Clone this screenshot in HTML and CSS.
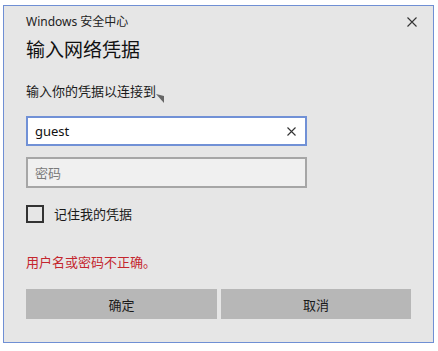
FILE: index.html
```html
<!DOCTYPE html>
<html lang="zh-CN">
<head>
    <meta charset="UTF-8">
    <meta name="viewport" content="width=device-width, initial-scale=1.0">
    <title>Windows 安全中心</title>
    <link rel="stylesheet" href="styles.css">
</head>
<body>
    <div class="dialog">
        <div class="title-bar">
            <span class="title">Windows 安全中心</span>
            <span class="close">
                <svg width="10" height="10" viewBox="0 0 10 10"><path d="M0.5 0.5 L9.5 9.5 M9.5 0.5 L0.5 9.5" stroke="#333" stroke-width="1.1"/></svg>
            </span>
        </div>

        <div class="content">
            <h2>输入网络凭据</h2>
            <p class="prompt">输入你的凭据以连接到<svg class="pointer" width="8" height="9" viewBox="0 0 8 9"><path d="M0 0 L8 2 L8 9 Z" fill="#666"/></svg></p>

            <div class="field focused">
                <span class="value">guest</span>
                <svg class="clear" width="9" height="9" viewBox="0 0 9 9"><path d="M0.5 0.5 L8.5 8.5 M8.5 0.5 L0.5 8.5" stroke="#333" stroke-width="1.1"/></svg>
            </div>
            <div class="field disabled">
                <span class="placeholder">密码</span>
            </div>

            <label class="remember">
                <span class="box"></span>
                <span>记住我的凭据</span>
            </label>

            <p class="error">用户名或密码不正确。</p>

            <div class="buttons">
                <button class="ok">确定</button>
                <button class="cancel">取消</button>
            </div>
        </div>
    </div>
</body>
</html>
```

FILE: styles.css
```css
* {
    margin: 0;
    padding: 0;
    box-sizing: border-box;
    font-family: "Noto Sans", "Noto Sans CJK SC", sans-serif;
}

body {
    background-color: #fff;
    width: 438px;
    height: 351px;
    overflow: hidden;
}

.dialog {
    margin: 5px 0 0 3px;
    width: 431px;
    height: 338px;
    background-color: #e6e6e6;
    border: 1px solid #6f8fd4;
    color: #1a1a1a;
}

.title-bar {
    height: 30px;
    display: flex;
    justify-content: space-between;
    align-items: center;
    padding: 0 0 0 22px;
}

.title {
    font-size: 12px;
    color: #222;
}

.close {
    width: 42px;
    height: 30px;
    display: flex;
    justify-content: center;
    align-items: center;
    padding-top: 2px;
}

.content {
    padding: 0 22px;
    display: flex;
    flex-direction: column;
}

.content h2 {
    font-size: 19px;
    font-weight: normal;
    line-height: 28px;
    color: #111;
}

.prompt {
    margin-top: 18px;
    font-size: 13px;
    line-height: 18px;
    display: flex;
    align-items: flex-end;
}

.pointer {
    margin-bottom: -3px;
}

.field {
    width: 281px;
    height: 30px;
    display: flex;
    justify-content: space-between;
    align-items: center;
    padding: 0 9px 0 7px;
    font-size: 13px;
}

.field.focused {
    margin-top: 16px;
    background-color: #fff;
    border: 2px solid #7191d6;
}

.field.disabled {
    margin-top: 11px;
    height: 31px;
    background-color: #f0f0f0;
    border: 2px solid #a6a6a6;
}

.value {
    color: #111;
}

.placeholder {
    color: #7a7a7a;
}

.remember {
    margin-top: 17px;
    display: flex;
    align-items: center;
    gap: 10px;
    font-size: 13px;
    line-height: 18px;
}

.box {
    width: 18px;
    height: 18px;
    border: 2px solid #333;
}

.error {
    margin-top: 30px;
    font-size: 13px;
    line-height: 18px;
    color: #c4262e;
}

.buttons {
    margin-top: 18px;
    display: flex;
    gap: 4px;
}

button {
    height: 30px;
    border: none;
    background-color: #b7b7b7;
    color: #1a1a1a;
    font-size: 13px;
}

.ok {
    width: 191px;
}

.cancel {
    width: 190px;
}
```
